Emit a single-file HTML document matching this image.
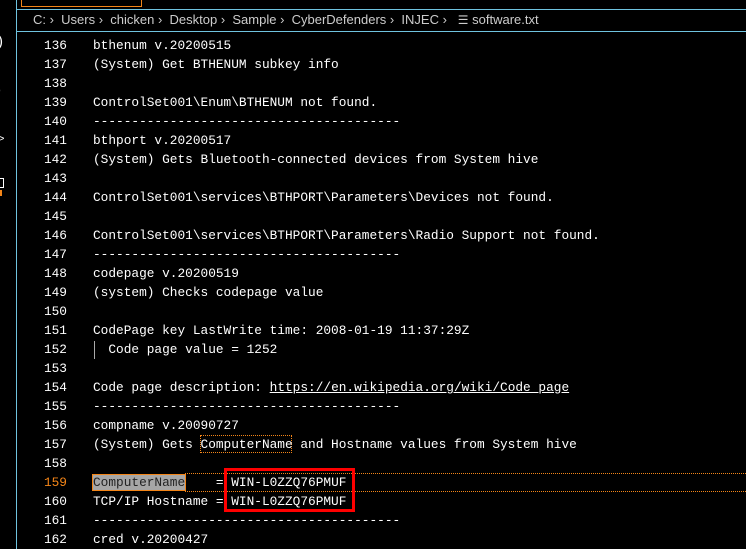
<!DOCTYPE html>
<html><head><meta charset="utf-8"><style>
body{margin:0;width:746px;height:549px;background:#000;overflow:hidden;position:relative;font-family:"Liberation Mono",monospace;}
.vl{position:absolute;left:16px;top:0;width:1px;height:549px;background:#6fc3df}
.hl{position:absolute;left:16px;right:0;height:1px;background:#6fc3df}
.ob{position:absolute;left:21px;top:-2px;width:119px;height:7px;border:1px solid #f38518}
.bc{position:absolute;left:33px;top:12px;font:13px "Liberation Sans",sans-serif;color:#ccc;white-space:pre}
.ln{position:absolute;left:0;width:67px;text-align:right;font-size:12.8px;color:#fff;line-height:19px}
.tx{position:absolute;left:93px;font-size:12.8px;color:#fff;line-height:19px;white-space:pre}
a{color:#fff;text-decoration:underline}
.sb{color:#fff;position:absolute;font:14px "Liberation Sans",sans-serif}
.hi{background:#a6a6a6;color:#222;outline:1px solid #f38518}
</style></head><body>
<div class="vl"></div>
<div class="hl" style="top:9px"></div>
<div class="hl" style="top:31px"></div>
<div class="ob"></div>
<div class="sb" style="left:-2px;top:33px;font-size:15px">)</div>
<div class="sb" style="left:-2px;top:82px;font-size:11px">,</div>
<div class="sb" style="left:-2px;top:133px;font-size:11px">&gt;</div>
<div style="position:absolute;left:-3px;top:178px;width:5px;height:8px;border:1px solid #fff"></div>
<div style="position:absolute;left:0;top:190px;width:2px;height:6px;background:#f38518"></div>
<div class="bc">C: ›  Users ›  chicken ›  Desktop ›  Sample ›  CyberDefenders ›  INJEC ›   <span style="font-size:12px">☰</span> software.txt</div>
<div style="position:absolute;left:185px;right:0;top:473px;border-top:1px dotted #f38518"></div>
<div style="position:absolute;left:185px;right:0;top:491px;border-top:1px dotted #f38518"></div>
<div style="position:absolute;left:200px;top:435px;width:92px;height:18px;border:1px dotted #f38518;box-sizing:border-box"></div>
<div id="c"></div>
<div style="position:absolute;left:224px;top:468px;width:131px;height:44px;border:3px solid #f00;box-sizing:border-box"></div>
<script>
var L=["bthenum v.20200515","(System) Get BTHENUM subkey info","","ControlSet001\\Enum\\BTHENUM not found.","----------------------------------------","bthport v.20200517","(System) Gets Bluetooth-connected devices from System hive","","ControlSet001\\services\\BTHPORT\\Parameters\\Devices not found.","","ControlSet001\\services\\BTHPORT\\Parameters\\Radio Support not found.","----------------------------------------","codepage v.20200519","(system) Checks codepage value","","CodePage key LastWrite time: 2008-01-19 11:37:29Z","  Code page value = 1252","","Code page description: <a>https://en.wikipedia.org/wiki/Code_page</a>","----------------------------------------","compname v.20090727","(System) Gets ComputerName and Hostname values from System hive","",'<span class="hi">ComputerName</span>    = WIN-L0ZZQ76PMUF',"TCP/IP Hostname = WIN-L0ZZQ76PMUF","----------------------------------------","cred v.20200427"];
var h="";for(var i=0;i<L.length;i++){var y=36+i*19;
h+='<div class="ln" style="top:'+y+'px;'+(i==23?'color:#f38518':'')+'">'+(136+i)+'</div><div class="tx" style="top:'+y+'px">'+L[i]+'</div>';}
h+='<div style="position:absolute;left:94px;top:341px;width:1px;height:18px;background:#aaa"></div>';
document.getElementById("c").innerHTML=h;
</script>
</body></html>
